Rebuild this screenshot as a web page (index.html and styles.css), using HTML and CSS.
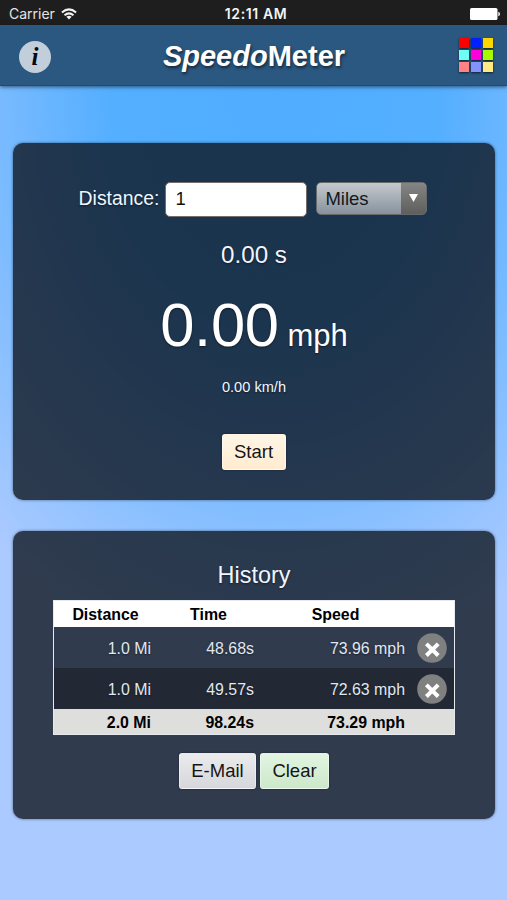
FILE: index.html
```html
<!DOCTYPE html>
<html lang="en">
<head>
<meta charset="utf-8">
<title>SpeedoMeter</title>
<link rel="stylesheet" href="styles.css">
</head>
<body>
<div class="status">
  <div class="carrier"><span>Carrier</span>
    <svg class="wifi" width="16" height="12" viewBox="0 0 16 12" fill="none" stroke="#f2f2f2" stroke-width="2"><path d="M.9 4.5Q8-1.8 15.1 4.5M3.5 7.3Q8 3.4 12.5 7.3"/><path d="M5.4 8.8Q8 6.8 10.6 8.8L8 11.5Z" fill="#f2f2f2" stroke="none"/></svg>
  </div>
  <div class="clock">12:11 AM</div>
  <svg class="battery" width="30" height="12" viewBox="0 0 30 12" fill="#fff"><rect width="27.5" height="12" rx="1.6"/><path d="M28.3 3.8Q30 4.3 30 6T28.3 8.2Z"/></svg>
</div>
<header class="bar">
  <div class="info">i</div>
  <h1><em>Speedo</em>Meter</h1>
  <div class="swatches"><i class="red"></i><i class="blue"></i><i class="gold"></i><i class="cyan"></i><i class="magenta"></i><i class="lime"></i><i class="coral"></i><i class="violet"></i><i class="sand"></i></div>
</header>
<main>
  <section class="panel meter">
    <div class="entry">
      <label for="dist">Distance:</label>
      <input id="dist" type="text" value="1">
      <div class="select"><span>Miles</span><b><svg width="9" height="8" viewBox="0 0 9 8"><path d="M0 0H9L4.5 8Z" fill="#fff"/></svg></b></div>
    </div>
    <div class="seconds">0.00 s</div>
    <div class="speed">0.00 <small>mph</small></div>
    <div class="metric">0.00 km/h</div>
    <button class="btn start">Start</button>
  </section>
  <section class="panel history">
    <h2>History</h2>
    <table>
      <colgroup><col class="c1"><col class="c2"><col class="c3"><col class="c4"></colgroup>
      <thead><tr><th>Distance</th><th>Time</th><th>Speed</th><th></th></tr></thead>
      <tbody>
        <tr><td>1.0 Mi</td><td>48.68s</td><td>73.96 mph</td><td class="del"><svg width="30" height="30" viewBox="0 0 30 30"><circle cx="15" cy="15" r="14.8" fill="#808080"/><path d="M9.4 10.9L21.2 22.5M21.2 10.9L9.4 22.5" stroke="#fff" stroke-width="4"/></svg></td></tr>
        <tr class="alt"><td>1.0 Mi</td><td>49.57s</td><td>72.63 mph</td><td class="del"><svg width="30" height="30" viewBox="0 0 30 30"><circle cx="15" cy="15" r="14.8" fill="#808080"/><path d="M9.4 10.9L21.2 22.5M21.2 10.9L9.4 22.5" stroke="#fff" stroke-width="4"/></svg></td></tr>
      </tbody>
      <tfoot><tr><td>2.0 Mi</td><td>98.24s</td><td>73.29 mph</td><td></td></tr></tfoot>
    </table>
    <div class="actions"><button class="btn mail">E-Mail</button><button class="btn clear">Clear</button></div>
  </section>
</main>
</body>
</html>
```
FILE: styles.css
```css
* { box-sizing: border-box; }
body {
  margin: 0;
  height: 900px;
  overflow: hidden;
  font-family: "Liberation Sans", Arial, sans-serif;
  color: #f0f6ff;
  background: radial-gradient(ellipse 430px 590px at 275px 90px, #50adff 0%, #54afff 38%, #abcaff 100%);
}
.status {
  height: 25px;
  padding: 2px 7px 0 9px;
  display: grid;
  grid-template-columns: 1fr auto 1fr;
  align-items: center;
  background: #1e1e1e;
  font: 14px Inter, sans-serif;
  color: #e4e4e4;
}
.carrier { display: flex; align-items: center; gap: 6px; }
.clock { font-weight: 600; font-size: 14px; padding-left: 3px; letter-spacing: .6px; color: #f4f4f4; }
.battery { justify-self: end; }
.bar {
  height: 61px;
  padding: 0 13px 0 19px;
  display: grid;
  grid-template-columns: 1fr auto 1fr;
  align-items: center;
  background: #2b5880;
  border-bottom: 1px solid #244b6e;
  box-shadow: 0 1px 4px rgba(0, 0, 0, .55);
}
.info {
  width: 32px;
  height: 32px;
  margin-top: 3px;
  border-radius: 50%;
  background: #c2cfdb;
  color: #05090d;
  font: italic bold 25px/31px "Liberation Serif", serif;
  text-align: center;
}
h1 {
  margin: 1px 0 0 -5px;
  font-size: 29px;
  line-height: 34px;
  color: #fff;
  text-shadow: 1px 2px 3px rgba(0, 0, 0, .55);
}
.swatches {
  justify-self: end;
  display: grid;
  grid-template-columns: repeat(3, 10px);
  gap: 2px;
  margin-right: 1px;
}
.swatches i { height: 10px; box-shadow: 0 1px 2px #10202f; }
.red { background: #f00; }
.blue { background: #0020ff; }
.gold { background: #ffd500; }
.cyan { background: #70fff4; }
.magenta { background: #f0d; }
.lime { background: #a8f800; }
.coral { background: #ff8285; }
.violet { background: #8492ff; }
.sand { background: #ffe985; }
main { padding: 57px 12px 0 13px; }
.panel {
  border-radius: 10px;
  background: rgba(10, 16, 25, .77);
  box-shadow: 0 0 3px rgba(0, 0, 0, .5);
  display: flex;
  flex-direction: column;
  align-items: center;
  text-shadow: 0 1px 2px rgba(0, 0, 0, .5);
}
.meter { height: 357px; padding-top: 39px; }
.entry { display: flex; align-items: flex-start; height: 35px; padding-right: 2px; }
.entry label { font-size: 19.4px; line-height: 33px; margin-right: 6px; }
.entry input {
  width: 142px;
  height: 35px;
  margin: 0 9px 0 0;
  padding: 0 0 1px 9px;
  border: 1px solid #756d69;
  border-radius: 5px;
  background: #fff;
  color: #111;
  font: 18.5px "Liberation Sans", sans-serif;
}
.select {
  display: flex;
  width: 111px;
  height: 33px;
  border: 1px solid #69696a;
  border-radius: 5px;
  overflow: hidden;
  color: #111820;
  text-shadow: none;
  background: linear-gradient(#c4c9cd, #87929d);
}
.select span { flex: 1; padding-left: 8px; font-size: 18.5px; line-height: 32px; }
.select b {
  width: 25px;
  display: flex;
  align-items: center;
  justify-content: center;
  padding-bottom: 2px;
  background: linear-gradient(#858585, #5e5e5c);
}
.seconds { margin-top: 23px; font-size: 24.2px; line-height: 30px; }
.speed { margin-top: 19px; font-size: 61.5px; line-height: 72px; color: #fff; letter-spacing: -.3px; word-spacing: -8px; }
.speed small { font-size: 31px; letter-spacing: 0; }
.metric { margin-top: 6px; font-size: 14.6px; line-height: 18px; }
.btn {
  height: 36px;
  padding: 0;
  border: 1px solid rgba(255, 255, 255, .45);
  border-radius: 3px;
  color: #151515;
  font: 18.5px "Liberation Sans", sans-serif;
  box-shadow: 0 0 2px rgba(0, 0, 0, .5);
}
.start { width: 64px; margin-top: 38px; margin-right: 1px; background: linear-gradient(#fff6e6, #ffebd0); }
.history { height: 288px; margin-top: 31px; padding-top: 30px; }
h2 { margin: 0; font-size: 23.4px; font-weight: normal; line-height: 28px; }
table {
  width: 402px;
  height: 135px;
  margin-top: 11px;
  table-layout: fixed;
  border-collapse: separate;
  border-spacing: 0;
  border: 1.5px solid #e5eaf0;
  font-size: 15.9px;
}
.c1, .c2 { width: 103px; }
.c3 { width: 151px; }
th, td { padding: 0; line-height: 20px; }
thead th { height: 26px; background: #fff; color: #000; text-shadow: none; padding: 2px 0 0; }
td { text-align: right; padding-right: 6px; }
tbody td { height: 41px; background: #303c4e; color: #e1e8f3; padding-top: 2px; }
tbody .alt td { background: #222935; }
tbody td.del { padding: 0 7px 0 0; }
.del svg { display: block; margin-left: auto; }
tfoot td { background: #dededd; color: #000; text-shadow: none; font-weight: bold; height: 25px; padding-top: 2px; }
.actions { display: flex; gap: 4px; margin-top: 18px; }
.mail { width: 77px; background: linear-gradient(#ebebed, #d6d7dc); }
.clear { width: 69px; background: linear-gradient(#e2f5e1, #cce8ca); }
```
